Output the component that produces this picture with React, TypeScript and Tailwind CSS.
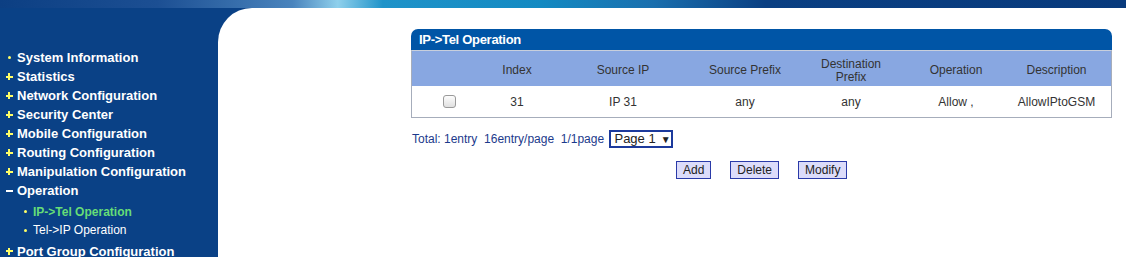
import React from 'react'

const menu = [
  { label: 'System Information', mark: 'dot' },
  { label: 'Statistics', mark: 'plus' },
  { label: 'Network Configuration', mark: 'plus' },
  { label: 'Security Center', mark: 'plus' },
  { label: 'Mobile Configuration', mark: 'plus' },
  { label: 'Routing Configuration', mark: 'plus' },
  { label: 'Manipulation Configuration', mark: 'plus' },
  { label: 'Operation', mark: 'minus' },
]

function Mark({ kind }: { kind: string }) {
  if (kind === 'dot') return <span className="w-[3px] h-[3px] rounded-full bg-[#ffff66] mx-[3px]" />
  if (kind === 'minus') return <span className="w-[7px] h-[2px] bg-white" />
  return (
    <span className="relative w-[7px] h-[7px]">
      <span className="absolute left-0 top-[2.5px] w-[7px] h-[2px] bg-[#ffff66]" />
      <span className="absolute left-[2.5px] top-0 w-[2px] h-[7px] bg-[#ffff66]" />
    </span>
  )
}

const cols = [
  { w: 'w-[74px]', h: '' },
  { w: 'w-[62px]', h: 'Index' },
  { w: 'w-[150px]', h: 'Source IP' },
  { w: 'w-[94px]', h: 'Source Prefix' },
  { w: 'w-[118px]', h: 'Destination Prefix' },
  { w: 'w-[92px]', h: 'Operation' },
  { w: 'flex-1', h: 'Description' },
]

const row = ['', '31', 'IP 31', 'any', 'any', 'Allow ,', 'AllowIPtoGSM']

export default function App() {
  return (
    <div className="w-[1126px] h-[257px] overflow-hidden flex flex-col font-['Liberation_Sans',Arial,sans-serif] bg-[#0a4186]">
      {/* bandeau haut */}
      <div className="h-[8px] shrink-0 bg-[linear-gradient(90deg,#0c3f83_0%,#1c4f93_14%,#4a84bd_26%,#8fd0ec_30%,#1f93c9_34%,#138ac2_48%,#1a6fae_58%,#0a3f82_68%,#083a7c_100%)]" />
      <div className="flex flex-1 min-h-0 overflow-hidden">
        {/* menu gauche */}
        <div className="w-[218px] shrink-0 pt-[40px] flex flex-col text-white">
          {menu.map(m => (
            <div key={m.label} className="h-[19px] shrink-0 flex items-center">
              <span className="w-[17px] flex justify-center pl-[1px]"><Mark kind={m.mark} /></span>
              <span className="text-[13px] font-bold leading-none">{m.label}</span>
            </div>
          ))}
          <div className="h-[21px] shrink-0 pt-[2px] flex items-center">
            <span className="w-[33px] flex justify-end pr-[6px]"><span className="w-[3px] h-[3px] rounded-full bg-[#ffff66]" /></span>
            <span className="text-[12px] font-bold text-[#66dd77] leading-none">IP-&gt;Tel Operation</span>
          </div>
          <div className="h-[18px] shrink-0 flex items-center">
            <span className="w-[33px] flex justify-end pr-[6px]"><span className="w-[3px] h-[3px] rounded-full bg-[#ffff66]" /></span>
            <span className="text-[12px] leading-none">Tel-&gt;IP Operation</span>
          </div>
          <div className="h-[22px] shrink-0 pt-[2px] flex items-center">
            <span className="w-[17px] flex justify-center pl-[1px]"><Mark kind="plus" /></span>
            <span className="text-[13px] font-bold leading-none">Port Group Configuration</span>
          </div>
        </div>

        {/* contenu */}
        <div className="flex-1 bg-white rounded-tl-[34px] pt-[21px] pl-[193px] pr-[14px]">
          <div className="w-[701px]">
            <div className="h-[21px] bg-[#0055a6] rounded-t-[7px] px-[8px] flex items-center">
              <span className="text-white text-[13px] font-bold tracking-[-0.3px]">IP-&gt;Tel Operation</span>
            </div>
            <div className="border border-[#a6adbb] border-t-[#c8cfdc]">
              <div className="h-[35px] pt-[4px] bg-[#88a7e1] flex text-[12px] text-[#333] leading-[13px]">
                {cols.map((c, i) => (
                  <div key={i} className={`${c.w} flex items-center justify-center text-center`}>
                    {c.h === 'Destination Prefix' ? <span>Destination<br />Prefix</span> : c.h}
                  </div>
                ))}
              </div>
              <div className="h-[31px] flex text-[12px] text-[#333]">
                {cols.map((c, i) => (
                  <div key={i} className={`${c.w} flex items-center justify-center`}>
                    {i === 0 ? (
                      <span className="w-[13px] h-[13px] rounded-[3px] border border-[#9a9a9a] bg-[linear-gradient(#fdfdfd,#e0e0e0)] ml-[1px]" />
                    ) : row[i]}
                  </div>
                ))}
              </div>
            </div>

            <div className="mt-[12px] flex items-center text-[12px] text-[#1c3a8c] ml-[1px]">
              <span className="whitespace-pre">Total: 1entry  16entry/page  1/1page </span>
              <span className="ml-[2px] h-[18px] w-[64px] border-2 border-[#1c3a9c] flex items-center pl-[3px] text-[13px] text-[#222] whitespace-nowrap">
                Page 1
                <span className="ml-[5px] text-[10px]">▼</span>
              </span>
            </div>

            <div className="mt-[13px] flex gap-[19px] pl-[265px] text-[12px] text-[#222]">
              <span className="h-[18px] px-[6px] bg-[#dcdcfa] border border-[#2a3aa8] flex items-center">Add</span>
              <span className="h-[18px] px-[6px] bg-[#dcdcfa] border border-[#2a3aa8] flex items-center">Delete</span>
              <span className="h-[18px] px-[6px] bg-[#dcdcfa] border border-[#2a3aa8] flex items-center">Modify</span>
            </div>
          </div>
        </div>
      </div>
    </div>
  )
}
